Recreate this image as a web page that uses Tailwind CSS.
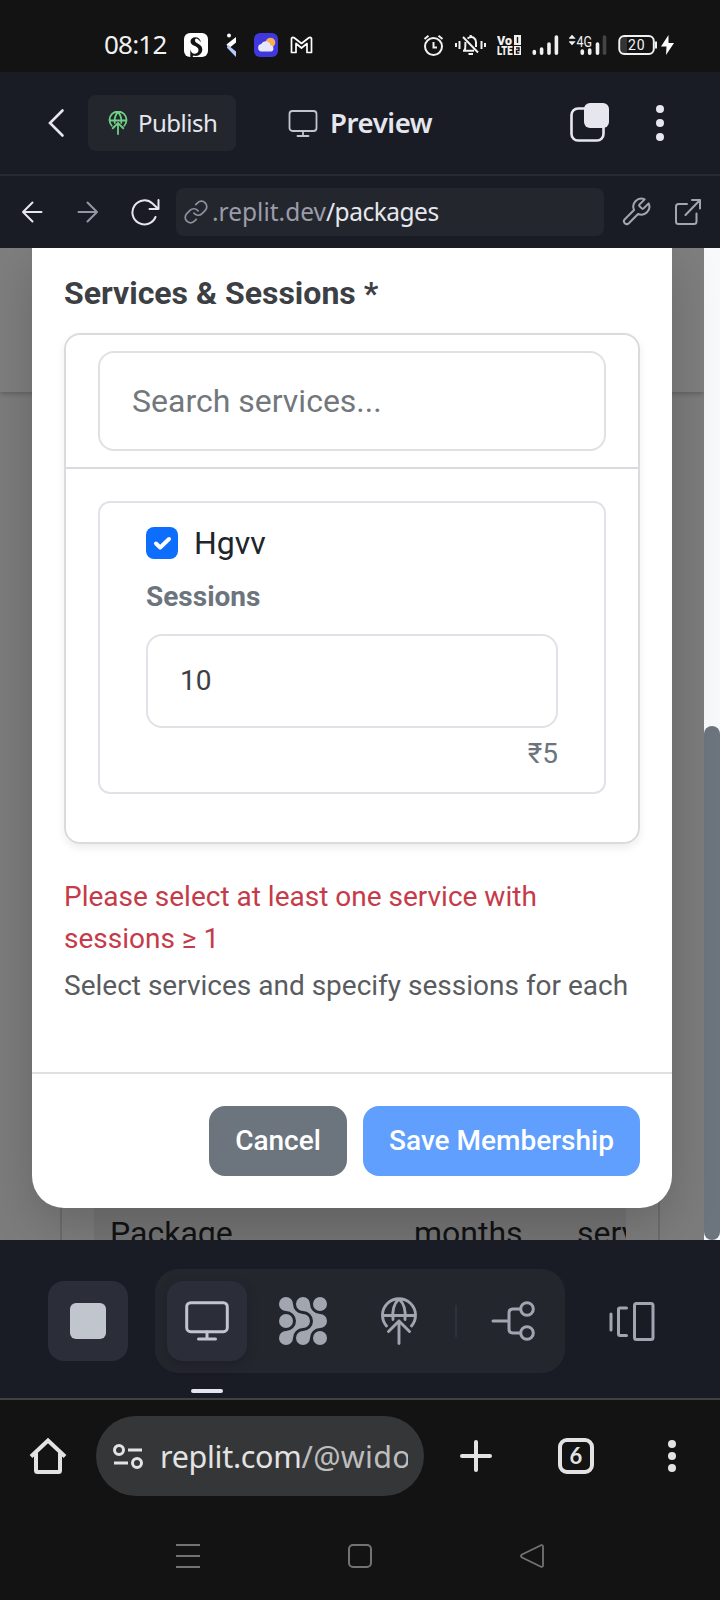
<!DOCTYPE html>
<html lang="en">
<head>
<meta charset="utf-8">
<title>Packages preview</title>
<script src="https://cdn.jsdelivr.net/npm/@tailwindcss/browser@4"></script>
</head>
<body class="w-[720px] h-[1600px] overflow-hidden bg-[#131313] font-['Roboto',sans-serif]">
<div class="flex flex-col w-[720px] h-[1600px] overflow-hidden">

<!-- Status bar -->
<header class="flex h-[72px] shrink-0 items-center pt-[18px] pl-[104px] text-[#f1f1f1]">
  <div class="-mt-0.5 w-20 text-[26px] leading-none whitespace-nowrap font-['Noto_Sans',sans-serif] tracking-[-0.8px]">08:12</div>
  <svg class="shrink-0" width="24" height="24" viewBox="0 0 24 24"><rect width="24" height="24" rx="6" fill="#fff"/><path d="M17 9.500C16.500 6 14 4.300 11.500 4.300C8.500 4.300 6.500 6.200 6.500 8.600C6.500 13.500 14.500 12.500 14.500 17C14.500 19.500 12.500 20.800 10.800 20.800C8 20.800 6.500 18.500 6.300 16V24H8.500L9.500 22.500C14 24.200 18.300 20.500 18.300 16.500C18.300 10.500 11 11 11 7.500C11 6 12 5.300 13 5.700C15 6.500 16 8 17 9.500Z" fill="#131313"/></svg>
  <svg class="shrink-0 ml-[18px]" width="12" height="24" viewBox="0 0 12 24"><circle cx="3" cy="2.500" r="2" fill="#fff"/><path d="M10 4V9.500L4.500 14L.5 11.500Z" fill="#fff"/><path d="M4.500 14L.5 11.500L3 16Z" fill="#fff"/><path d="M2.500 12.500L.8 14.500L10 24V18.500Z" fill="#b5ccfa"/></svg>
  <svg class="shrink-0 ml-4" width="24" height="24" viewBox="0 0 24 24"><rect width="24" height="24" rx="6" fill="#4038dc"/><circle cx="16.500" cy="9.500" r="4.800" fill="#f8ae52"/><path d="M7.500 18.500a3.800 3.800 0 0 1-.3-7.500a5 5 0 0 1 9.300 1.200a3.200 3.200 0 0 1 .5 6.300z" fill="#e9e7fb"/></svg>
  <svg class="shrink-0 ml-3" width="24" height="24" viewBox="0 0 24 24"><path d="M1.500 19.500V5.500Q2.500 3.500 4.500 5L11.500 10.500L18.500 5Q20.500 3.500 21.500 5.500V19.500H17V10.500L11.500 15L6 10.500V19.500Z" fill="none" stroke="#fff" stroke-width="1.700" stroke-linejoin="round"/></svg>

  <svg class="shrink-0 ml-[109px]" width="21" height="24" viewBox="0 0 21 24" fill="none" stroke="#f1f1f1" stroke-width="2"><circle cx="10.500" cy="13.500" r="8.500"/><path d="M10.500 9V14.500H14M1.500 6L5.500 2.800M19.500 6L15.500 2.800"/></svg>
  <svg class="shrink-0 ml-[11px]" width="31" height="24" viewBox="0 0 31 24" fill="none" stroke="#f1f1f1" stroke-width="2"><path d="M1 10V14M4.500 8V16M26.500 8V16M30 10V14M8 4L23 19.500M12.500 5.500C18 2 21 6 21 9V14M9.500 17.500C11 15 10 12 10.500 9M8 17.800H19"/><path d="M13.500 21H18M15.700 2V4" stroke-width="2.200"/></svg>
  <svg class="shrink-0 ml-[11px]" width="26" height="24" viewBox="0 0 26 24"><g font-family="Roboto" font-weight="900" font-size="13.500" fill="#f1f1f1"><text x="0" y="11.500" textLength="15" lengthAdjust="spacingAndGlyphs">Vo</text><text x="0" y="22" textLength="15.500" lengthAdjust="spacingAndGlyphs">LTE</text></g><rect x="17" y="2" width="7" height="10" fill="#f1f1f1"/><rect x="17" y="13" width="7" height="9" fill="#f1f1f1"/><path d="M20.500 4V10M19 15H22V17.500H19.500V20H22.300" stroke="#131313" stroke-width="1.400" fill="none"/></svg>
  <svg class="shrink-0 ml-[9px]" width="27" height="24" viewBox="0 0 27 24" stroke="#f1f1f1" stroke-width="3.600" stroke-linecap="round"><path d="M2.300 18.500V20.200M9.600 16V20.200M17 11V20.200M24.400 4V20.200"/></svg>
  <svg class="shrink-0 ml-[10px]" width="39" height="24" viewBox="0 0 39 24"><path d="M3 2.800L5 5H1ZM3 11.200L5 9H1Z" fill="#f1f1f1" stroke="#f1f1f1" stroke-width="1.500"/><text x="7.500" y="13.500" font-family="Roboto" font-size="15" textLength="15.500" lengthAdjust="spacingAndGlyphs" fill="#f1f1f1">4G</text><path d="M13.300 18V20.200M20.700 17V20.200M28.500 11V20.200" stroke="#f1f1f1" stroke-width="3.600" stroke-linecap="round"/><path d="M35.500 4V20.200" stroke="#444" stroke-width="3.600" stroke-linecap="round"/></svg>
  <svg class="shrink-0 ml-[10px]" width="40" height="24" viewBox="0 0 40 24"><rect x="3" y="4" width="6" height="16" fill="#333"/><rect x="1.300" y="3" width="34.500" height="18" rx="5" fill="none" stroke="#f1f1f1" stroke-width="2"/><path d="M38 8.500V15.500" stroke="#f1f1f1" stroke-width="2"/><text x="10" y="16.800" font-family="Roboto" font-size="14" textLength="16.500" fill="#f1f1f1">20</text></svg>
  <svg class="shrink-0 ml-[2px]" width="15" height="24" viewBox="0 0 15 24"><path d="M8.500 2L1 13.500H6.500L6 22L14 10H8.500Z" fill="#fff"/></svg>
</header>

<!-- Workspace header -->
<section class="flex h-[104px] shrink-0 items-center border-b-2 border-[#272935] bg-[#1a1c25] pl-12 font-['Noto_Sans',sans-serif] text-[#e6e7ee]">
  <svg class="shrink-0" width="18" height="30" viewBox="0 0 18 30" fill="none" stroke="#e6e7ee" stroke-width="2.600" stroke-linecap="round"><path d="M14.500 2.500L2 15L14.500 27.500"/></svg>
  <div class="ml-[22px] flex h-14 w-[148px] shrink-0 items-center rounded-lg bg-[#24262e] pl-5">
    <svg class="shrink-0" width="20" height="24" viewBox="0 0 40 48" fill="none" stroke="#6fcf84" stroke-width="3.600" stroke-linecap="round"><path d="M7.500 29.500A17 17 0 1 1 32.500 29.500M3 19H37M13.500 24C12.500 13 15 7 20 2.500C25 7 27.500 13 26.500 24M20 46V24M9.500 34.500L20 24L30.500 34.500"/></svg>
    <span class="ml-[10px] text-[24px] leading-none whitespace-nowrap tracking-[-0.5px]">Publish</span>
  </div>
  <svg class="ml-[51px] shrink-0" width="32" height="30" viewBox="0 0 32 30" fill="none" stroke="#c2c5d0" stroke-width="1.800" stroke-linecap="round"><rect x="2.500" y="3" width="27" height="20" rx="3"/><path d="M16 23V28M10.500 28H21.500"/></svg>
  <span class="ml-[11px] w-[104px] text-[27.500px] leading-none font-semibold whitespace-nowrap tracking-[-0.4px]">Preview</span>
  <svg class="ml-[136px] shrink-0" width="40" height="40" viewBox="0 0 40 40"><rect x="1.500" y="5.500" width="32" height="32" rx="6.500" fill="none" stroke="#e6e7ee" stroke-width="2.600"/><rect x="14" y="0" width="25" height="25" rx="6" fill="#e6e7ee"/></svg>
  <svg class="ml-[45px] shrink-0" width="10" height="38" viewBox="0 0 10 38" fill="#e6e7ee"><circle cx="5" cy="5" r="4"/><circle cx="5" cy="19" r="4"/><circle cx="5" cy="33" r="4"/></svg>
</section>

<!-- Preview address bar -->
<nav class="flex h-[72px] shrink-0 items-center bg-[#1a1c25] pl-[21px] font-['Noto_Sans',sans-serif]">
  <svg class="shrink-0" width="22" height="24" viewBox="0 0 22 24" fill="none" stroke="#e6e7ee" stroke-width="2" stroke-linecap="round" stroke-linejoin="round"><path d="M20.500 12H2M11.500 2.500L2 12L11.500 21.500"/></svg>
  <svg class="ml-[34px] shrink-0" width="22" height="24" viewBox="0 0 22 24" fill="none" stroke="#9496a5" stroke-width="2" stroke-linecap="round" stroke-linejoin="round"><path d="M1.500 12H20M10.500 2.500L20 12L10.500 21.500"/></svg>
  <svg class="ml-[31px] shrink-0" width="30" height="28" viewBox="0 0 30 28" fill="none" stroke="#e6e7ee" stroke-width="2" stroke-linecap="round" stroke-linejoin="round"><path d="M25.500 19A12 12 0 1 1 22.500 5.500L28 10.800M28.500 2V11H19.500"/></svg>
  <div class="ml-4 flex h-12 w-[428px] shrink-0 items-center rounded-lg bg-[#24262e] pl-[7px]">
    <svg class="shrink-0" width="26" height="26" viewBox="0 0 24 24" fill="none" stroke="#8e909f" stroke-width="1.600" stroke-linecap="round" stroke-linejoin="round"><path d="M10 13a5 5 0 0 0 7.540.540l3-3a5 5 0 0 0-7.070-7.070l-1.720 1.710M14 11a5 5 0 0 0-7.540-.540l-3 3a5 5 0 0 0 7.070 7.070l1.710-1.710"/></svg>
    <span class="ml-[3px] text-[24.500px] leading-none whitespace-nowrap text-[#9a9caa]">.replit.dev</span><span class="text-[24.500px] leading-none whitespace-nowrap tracking-[-0.5px] text-[#e6e7ee]">/packages</span>
  </div>
  <svg class="ml-[16px] shrink-0" width="32" height="32" viewBox="0 0 24 24" fill="none" stroke="#a3a5b3" stroke-width="1.500" stroke-linecap="round" stroke-linejoin="round"><path d="M14.700 6.300a1 1 0 0 0 0 1.400l1.600 1.600a1 1 0 0 0 1.400 0l3.770-3.770a6 6 0 0 1-7.940 7.940l-6.910 6.910a2.120 2.120 0 0 1-3-3l6.910-6.910a6 6 0 0 1 7.940-7.940z"/></svg>
  <svg class="ml-[21px] shrink-0" width="28" height="28" viewBox="0 0 28 28" fill="none" stroke="#a3a5b3" stroke-width="2" stroke-linecap="round" stroke-linejoin="round"><path d="M14 6H5.500Q3 6 3 8.500V23.500Q3 26 5.500 26H21Q23.500 26 23.500 23.500V15.500M19 2H27V10.500M27 2L12.500 17"/></svg>
</nav>

<!-- Previewed page -->
<main class="relative flex h-[992px] shrink-0 overflow-hidden">
  <div class="flex w-[704px] flex-col bg-[#7c7c7c]">
    <div class="h-[144px] shrink-0 bg-[#7e7e7e] shadow-[0_2px_5px_rgba(0,0,0,0.22)]"></div>
    <div class="mr-11 ml-[60px] flex h-[848px] items-end border-x-2 border-[#6c6c6c] px-8">
      <div class="flex h-[80px] w-full items-end overflow-hidden bg-[#747474] pl-4 text-[32px] text-[#101214]">
        <div class="flex h-[52px] items-start pt-[29px] leading-none whitespace-nowrap"><span class="w-[304px]">Package</span><span class="w-[163px]">months</span><span>services</span></div>
      </div>
    </div>
  </div>
  <div class="flex w-4 flex-col justify-end bg-[#f8f9fb]"><div class="h-[514px] rounded-full bg-[#6c757d]"></div></div>

  <!-- Membership dialog -->
  <div class="absolute top-0 left-8 flex h-[960px] w-[640px] flex-col rounded-b-[32px] bg-white shadow-[0_16px_48px_rgba(0,0,0,0.175)]">
    <div class="flex h-[824px] flex-col px-8">
      <div class="mt-[27px] h-9 text-[32px] leading-[36px] font-bold whitespace-nowrap text-[#3c4044]">Services &amp; Sessions *</div>
      <div class="mt-[22px] flex h-[511px] shrink-0 flex-col rounded-[16px] border-2 border-[#dadbde] shadow-[0_4px_8px_rgba(0,0,0,0.075)]">
        <div class="h-[134px] shrink-0 border-b-2 border-[#dadbde] px-8 pt-4">
          <div class="flex h-[100px] items-center rounded-[16px] border-2 border-[#dfe1e5] px-8 text-[32px] text-[#72777c]">Search services...</div>
        </div>
        <div class="px-8 pt-8">
          <div class="flex h-[293px] flex-col rounded-[12px] border-2 border-[#dfe2e6] px-[46px] pt-6">
            <div class="flex h-8 items-center gap-4">
              <div class="flex size-8 items-center justify-center rounded-lg bg-[#0d6efd]"><svg width="32" height="32" viewBox="0 0 32 32" fill="none" stroke="#fff" stroke-width="4" stroke-linecap="round" stroke-linejoin="round"><path d="M10 16.500l4.200 4L23 12"/></svg></div>
              <span class="text-[32px] leading-none text-[#212529]">Hgvv</span>
            </div>
            <div class="mt-[17px] h-10 text-[28px] leading-[42px] font-bold text-[#6c757d]">Sessions</div>
            <div class="mt-[18px] flex h-[94px] items-center rounded-[16px] border-2 border-[#dfe2e6] px-8 text-[28px] text-[#3c4044]">10</div>
            <div class="mt-[5px] text-right text-[28px] leading-[42px] text-[#6c757d]">₹5</div>
          </div>
        </div>
      </div>
      <div class="mt-[32px] text-[28px] leading-[42px] text-[#c53b49]">Please select at least one service with<br>sessions ≥ 1</div>
      <div class="mt-[5px] text-[28px] leading-[42px] whitespace-nowrap text-[#595c5f]">Select services and specify sessions for each</div>
    </div>
    <div class="flex h-[136px] items-start justify-end gap-4 border-t-2 border-[#dee0e4] px-8 pt-8 text-[28px] font-medium text-white">
      <div class="flex h-[70px] w-[138px] items-center justify-center rounded-[16px] bg-[#6c757d]">Cancel</div>
      <div class="flex h-[70px] w-[277px] items-center justify-center rounded-[16px] bg-[#609ffe]">Save Membership</div>
    </div>
  </div>
</main>

<!-- Workspace tool bar -->
<section class="relative flex h-[160px] shrink-0 items-start border-b-2 border-[#40423f] bg-[#1a1c25] pt-[29px] pl-12">
  <div class="mt-3 flex size-20 shrink-0 items-center justify-center rounded-[16px] bg-[#2b2d38]"><div class="size-9 rounded-[6px] bg-[#c1c5ce]"></div></div>
  <div class="ml-[27px] flex h-[104px] w-[410px] shrink-0 items-center rounded-[24px] bg-[#24262e] pl-3">
    <div class="flex size-20 shrink-0 items-center justify-center rounded-[16px] bg-[#2b2d38] shadow-[0_4px_12px_rgba(0,0,0,0.18)]"><svg width="48" height="48" viewBox="0 0 48 48" fill="none" stroke="#c1c5ce" stroke-width="3" stroke-linecap="round"><rect x="3.700" y="5.700" width="40.600" height="29" rx="4"/><path d="M24 35V42M15.500 42H32.500"/></svg></div>
    <svg class="ml-8 shrink-0" width="48" height="48" viewBox="0 0 48 48" fill="#a1a6b0"><path d="M14 7A10 10 0 0 0 24 17A7 7 0 0 1 24 31A10 10 0 0 0 14 41A7 7 0 1 1 7 34A10 10 0 0 0 7 14A7 7 0 1 1 14 7Z"/><path d="M31 7A10 10 0 0 0 41 17A7 7 0 0 1 41 31A10 10 0 0 0 31 41A7 7 0 1 1 24 34A10 10 0 0 0 24 14A7 7 0 1 1 31 7Z"/><circle cx="41" cy="7" r="7"/><circle cx="7" cy="24" r="7"/><circle cx="41" cy="41" r="7"/></svg>
    <svg class="ml-[52px] shrink-0" width="40" height="48" viewBox="0 0 40 48" fill="none" stroke="#a1a5b1" stroke-width="2.900" stroke-linecap="round" stroke-linejoin="round"><path d="M7.500 29A16.500 16.500 0 1 1 32.500 29M3.500 18.500H36.500M14 22.500C13 13 15.500 6 20 2C24.500 6 27 13 26 22.500M20 46.500V24M9.500 34.500L20 24L30.500 34.500"/></svg>
    <div class="ml-[36px] h-8 w-0.5 shrink-0 bg-[#2f313c]"></div>
    <svg class="ml-[32px] shrink-0" width="48" height="48" viewBox="0 0 48 48" fill="none" stroke="#a1a5b1" stroke-width="3" stroke-linecap="round"><path d="M4 24H20M31.500 12H24Q20 12 20 16V32Q20 36 24 36H31.500"/><circle cx="38" cy="12" r="6.300"/><circle cx="38" cy="36" r="6.300"/></svg>
  </div>
  <svg class="mt-7 ml-[42px] shrink-0" width="50" height="48" viewBox="0 0 50 48" fill="none" stroke="#a1a5b1" stroke-width="3" stroke-linecap="round"><path d="M4 17V33M19.500 11H13Q11.500 11 11.500 12.500V37Q11.500 38.500 13 38.500H19.500"/><rect x="27.500" y="6.500" width="18.500" height="36" rx="2"/></svg>
  <div class="absolute bottom-[5px] left-[191px] h-1 w-8 rounded-full bg-[#e6e7ee]"></div>
</section>

<!-- Browser bar -->
<section class="flex h-[112px] shrink-0 items-center pl-[29px] text-[#e3e3e3]">
  <svg class="shrink-0" width="38" height="38" viewBox="0 0 38 38" fill="none" stroke="#e3e3e3" stroke-width="4"><path d="M2 19.500L19 3.500L36 19.500M7 16V33.500Q7 35 8.500 35H29.500Q31 35 31 33.500V16"/></svg>
  <div class="ml-[29px] flex h-20 w-[328px] shrink-0 items-center rounded-full bg-[#353638] pl-4">
    <svg class="shrink-0" width="32" height="28" viewBox="0 0 32 28" fill="none" stroke="#e3e3e3" stroke-width="3"><circle cx="7" cy="8" r="4.500"/><circle cx="25" cy="21" r="4.500"/><path d="M16 8H30M2 21H16"/></svg>
    <div class="ml-[16px] w-[248px] overflow-hidden font-['Noto_Sans',sans-serif] text-[30.500px] leading-[44px] tracking-[-0.3px] whitespace-nowrap"><span>replit.com</span><span class="tracking-[0.3px] text-[#bdbdbd]">/@widower</span></div>
  </div>
  <svg class="ml-9 shrink-0" width="32" height="32" viewBox="0 0 32 32" stroke="#e3e3e3" stroke-width="4" stroke-linecap="round"><path d="M2 16H30M16 2V30"/></svg>
  <div class="ml-[66px] flex size-9 shrink-0 items-center justify-center rounded-[9px] border-4 border-[#e3e3e3] font-['Lato',sans-serif] text-[22px] leading-none font-bold">6</div>
  <svg class="ml-[73px] shrink-0" width="10" height="34" viewBox="0 0 10 34" fill="#e3e3e3"><circle cx="5" cy="5" r="4"/><circle cx="5" cy="17" r="4"/><circle cx="5" cy="29" r="4"/></svg>
</section>

<!-- System navigation -->
<footer class="flex h-[88px] shrink-0 items-center justify-between px-[175px]">
  <svg width="26" height="26" viewBox="0 0 26 26" fill="none" stroke="#737373" stroke-width="2"><path d="M1 2H25M1 13H25M1 24H25"/></svg>
  <svg width="26" height="26" viewBox="0 0 26 26" fill="none" stroke="#737373" stroke-width="2"><rect x="2" y="2" width="22" height="22" rx="4"/></svg>
  <svg width="26" height="26" viewBox="0 0 26 26" fill="none" stroke="#737373" stroke-width="1.800" stroke-linejoin="round"><path d="M22 2.200Q24 1.500 24 4V22Q24 24.500 22 23.800L3 14.500Q1 13 3 11.500Z"/></svg>
</footer>
</div>
</body>
</html>
